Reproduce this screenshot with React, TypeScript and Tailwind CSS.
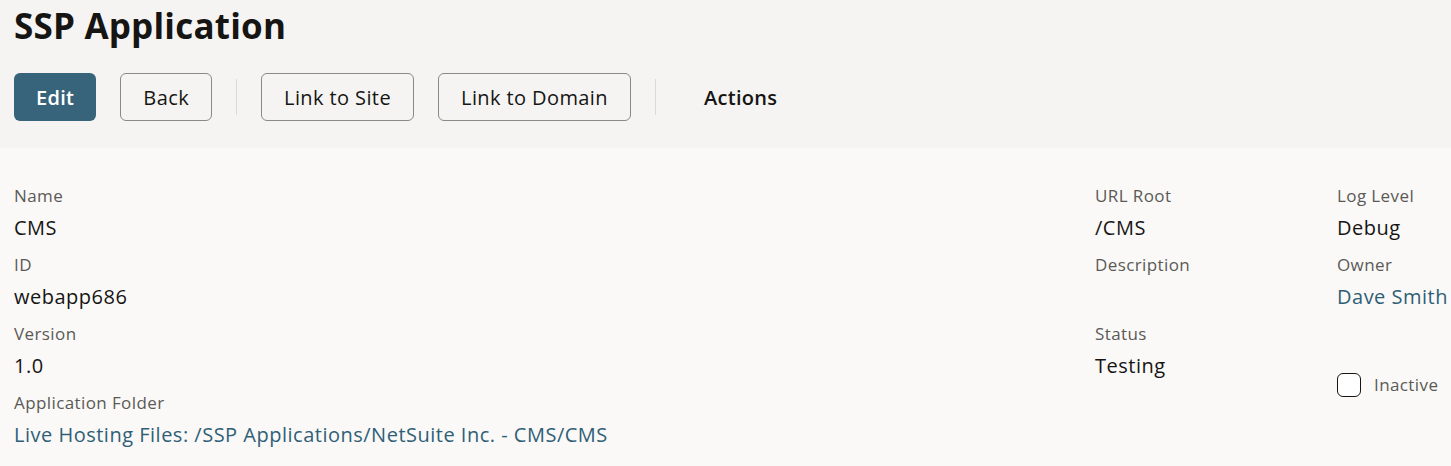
import React from "react";

const font = { fontFamily: '"Open Sans", "Noto Sans", sans-serif' };

function Field({ label, value, link }: { label: string; value?: string; link?: boolean }) {
  return (
    <div className="flex flex-col gap-[6px]">
      <div className="h-6 text-[17px] leading-6 tracking-[0.4px] text-[#5b5956]">{label}</div>
      <div
        className={`h-7 text-[20px] leading-7 tracking-[0.5px] whitespace-nowrap ${link ? "text-[#2f5f76]" : "text-[#161513]"}`}
      >
        {value ?? ""}
      </div>
    </div>
  );
}

function Btn({ children }: { children: React.ReactNode }) {
  return (
    <button className="h-12 rounded-md border border-[#8b8986] bg-transparent px-[22px] pt-[2px] text-[20px] tracking-[0.4px] font-medium text-[#161513]">
      {children}
    </button>
  );
}

function Sep() {
  return <div className="h-9 w-px bg-[#dcdad7]" />;
}

export default function App() {
  return (
    <div className="min-h-[466px] w-full bg-[#faf9f8]" style={font}>
      <header className="bg-[#f5f4f2] px-[14px] pt-1 pb-[27px]">
        <h1 className="h-[44px] text-[35px] leading-[44px] tracking-[0.2px] font-bold text-[#161513]">SSP Application</h1>
        <div className="mt-[25px] flex items-center gap-6">
          <button className="h-12 rounded-md bg-[#37647a] px-[22px] pt-[2px] text-[20px] tracking-[0.3px] font-semibold text-white">
            Edit
          </button>
          <Btn>Back</Btn>
          <Sep />
          <Btn>Link to Site</Btn>
          <Btn>Link to Domain</Btn>
          <Sep />
          <button className="h-12 px-6 pt-[2px] text-[20px] tracking-[0.3px] font-semibold text-[#161513]">Actions</button>
        </div>
      </header>
      <main className="grid grid-cols-[1081px_242px_1fr] pl-[14px] pt-[36px] pb-[17px]">
        <div className="flex flex-col gap-[11px]">
          <Field label="Name" value="CMS" />
          <Field label="ID" value="webapp686" />
          <Field label="Version" value="1.0" />
          <Field label="Application Folder" value="Live Hosting Files: /SSP Applications/NetSuite Inc. - CMS/CMS" link />
        </div>
        <div className="flex flex-col gap-[11px]">
          <Field label="URL Root" value="/CMS" />
          <Field label="Description" />
          <Field label="Status" value="Testing" />
        </div>
        <div className="flex flex-col gap-[11px]">
          <Field label="Log Level" value="Debug" />
          <Field label="Owner" value="Dave Smith" link />
          <label className="mt-[50px] flex items-center gap-[13px]">
            <span className="h-6 w-6 rounded-md border border-[#161513] bg-white" />
            <span className="text-[17px] tracking-[0.4px] text-[#5b5956]">Inactive</span>
          </label>
        </div>
      </main>
    </div>
  );
}
